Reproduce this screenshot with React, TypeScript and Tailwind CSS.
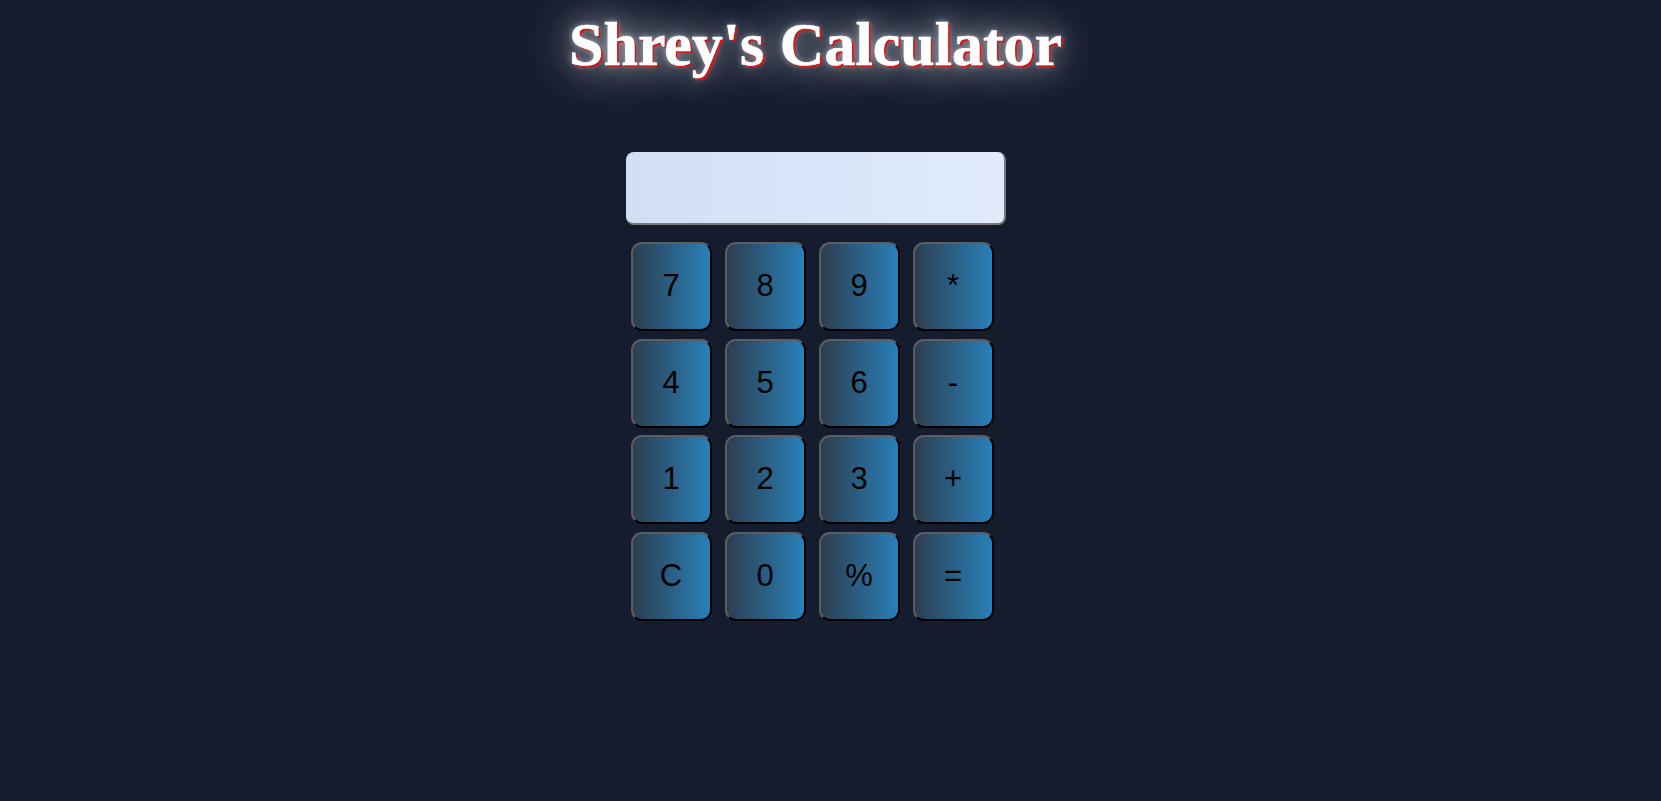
import React from "react";

const keys = ["7", "8", "9", "*", "4", "5", "6", "-", "1", "2", "3", "+", "C", "0", "%", "="];

export default function App() {
  return (
    <div className="min-h-[801px] w-full bg-[#151c2e] pr-[30px]">
      <div className="flex flex-col items-center pt-[9px]">
        <h1
          className="m-0 text-[62px] font-bold leading-[71px] text-white"
          style={{
            fontFamily: '"Liberation Serif", "Times New Roman", serif',
            WebkitTextStroke: "0.6px white",
            textShadow:
              "2px 2px 1px #d01818, 0 0 6px rgba(255,255,255,0.55), 0 0 24px rgba(255,255,255,0.45), 0 0 50px rgba(255,255,255,0.45), 0 0 80px rgba(255,255,255,0.4), 0 0 80px rgba(255,255,255,0.3)",
          }}
        >
          Shrey's Calculator
        </h1>
        <div className="mt-[72px] flex w-[380px] flex-col">
          <div className="h-[73px] w-[380px] rounded-[8px] border-b-2 border-r-2 border-b-[#7a7a7a] border-r-[#7a7a7a] bg-[linear-gradient(to_right,#d1dff5,#e1ebfc)]" />
          <div className="ml-[5px] mt-[17px] grid grid-cols-[repeat(4,81px)] gap-x-[13px] gap-y-[7.5px]">
            {keys.map((k) => (
              <button
                key={k}
                className="flex h-[89px] w-[81px] items-center justify-center rounded-[11px] border-2 border-t-[#5a5e63] border-l-[#5a5e63] border-b-black border-r-black bg-[linear-gradient(to_right,#2c3e50,#2980b9)] text-[31px] text-black"
                style={{ fontFamily: '"Liberation Sans", Arial, sans-serif' }}
              >
                {k}
              </button>
            ))}
          </div>
        </div>
      </div>
    </div>
  );
}
